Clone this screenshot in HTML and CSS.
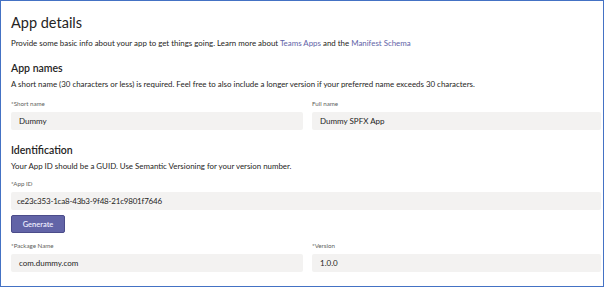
FILE: index.html
```html
<!DOCTYPE html>
<html lang="en">
<head>
  <meta charset="UTF-8" />
  <title>App details</title>
  <link rel="stylesheet" href="styles.css">
</head>
<body>

  <div class="frame">
    <h1>App details</h1>
    <p class="desc">Provide some basic info about your app to get things going. Learn more about <a href="#">Teams Apps</a> and the <a href="#">Manifest Schema</a></p>

    <h2>App names</h2>
    <p class="desc">A short name (30 characters or less) is required. Feel free to also include a longer version if your preferred name exceeds 30 characters.</p>
    <div class="row">
      <div class="field">
        <label>*Short name</label>
        <div class="input">Dummy</div>
      </div>
      <div class="field">
        <label>Full name</label>
        <div class="input">Dummy SPFX App</div>
      </div>
    </div>

    <h2 class="ident">Identification</h2>
    <p class="desc">Your App ID should be a GUID. Use Semantic Versioning for your version number.</p>
    <div class="field wide">
      <label>*App ID</label>
      <div class="input guid">ce23c353-1ca8-43b3-9f48-21c9801f7646</div>
    </div>
    <button class="gen-btn" type="button">Generate</button>
    <div class="row last">
      <div class="field">
        <label>*Package Name</label>
        <div class="input">com.dummy.com</div>
      </div>
      <div class="field">
        <label>*Version</label>
        <div class="input">1.0.0</div>
      </div>
    </div>
  </div>

</body>
</html>
```

FILE: styles.css
```css
body {
  margin: 0;
  font-family: 'Segoe UI', Lato, sans-serif;
  background: #fff;
  color: #252423;
}

.frame {
  width: 590px;
  height: 275px;
  border: 1px solid #4472c4;
  padding: 10px 2px 0 10px;
  overflow: hidden;
}

h1 {
  margin: 0;
  font-size: 14.5px;
  line-height: 23px;
  font-weight: 400;
}

h2 {
  margin: 9px 0 0;
  font-size: 10.5px;
  line-height: 18px;
  font-weight: 600;
}

h2.ident {
  margin-top: 11px;
}

.desc {
  margin: 2px 0 0;
  font-size: 7.9px;
  line-height: 14px;
}

h2 + .desc {
  margin-top: 0;
}

.desc a {
  color: #6264a7;
  text-decoration: none;
}

.row {
  display: grid;
  grid-template-columns: 292px 1fr;
  gap: 9px;
  margin-top: 7px;
}

.row.last {
  margin-top: 7px;
}

.field.wide {
  margin-top: 5px;
}

label {
  display: block;
  font-size: 6.2px;
  line-height: 11px;
  color: #605e5c;
}

.input {
  margin-top: 3px;
  height: 18px;
  line-height: 18px;
  padding: 0 8px;
  background: #f3f2f1;
  border-radius: 2px;
  font-size: 8px;
}

.input.guid {
  padding-left: 6px;
  letter-spacing: -0.2px;
}

.gen-btn {
  display: block;
  margin-top: 5px;
  width: 54px;
  height: 18px;
  padding: 0;
  background: #6264a7;
  border: 1px solid #4b4c8a;
  border-radius: 2px;
  color: #eef;
  font-family: inherit;
  font-size: 7.5px;
  font-weight: 600;
}
```
